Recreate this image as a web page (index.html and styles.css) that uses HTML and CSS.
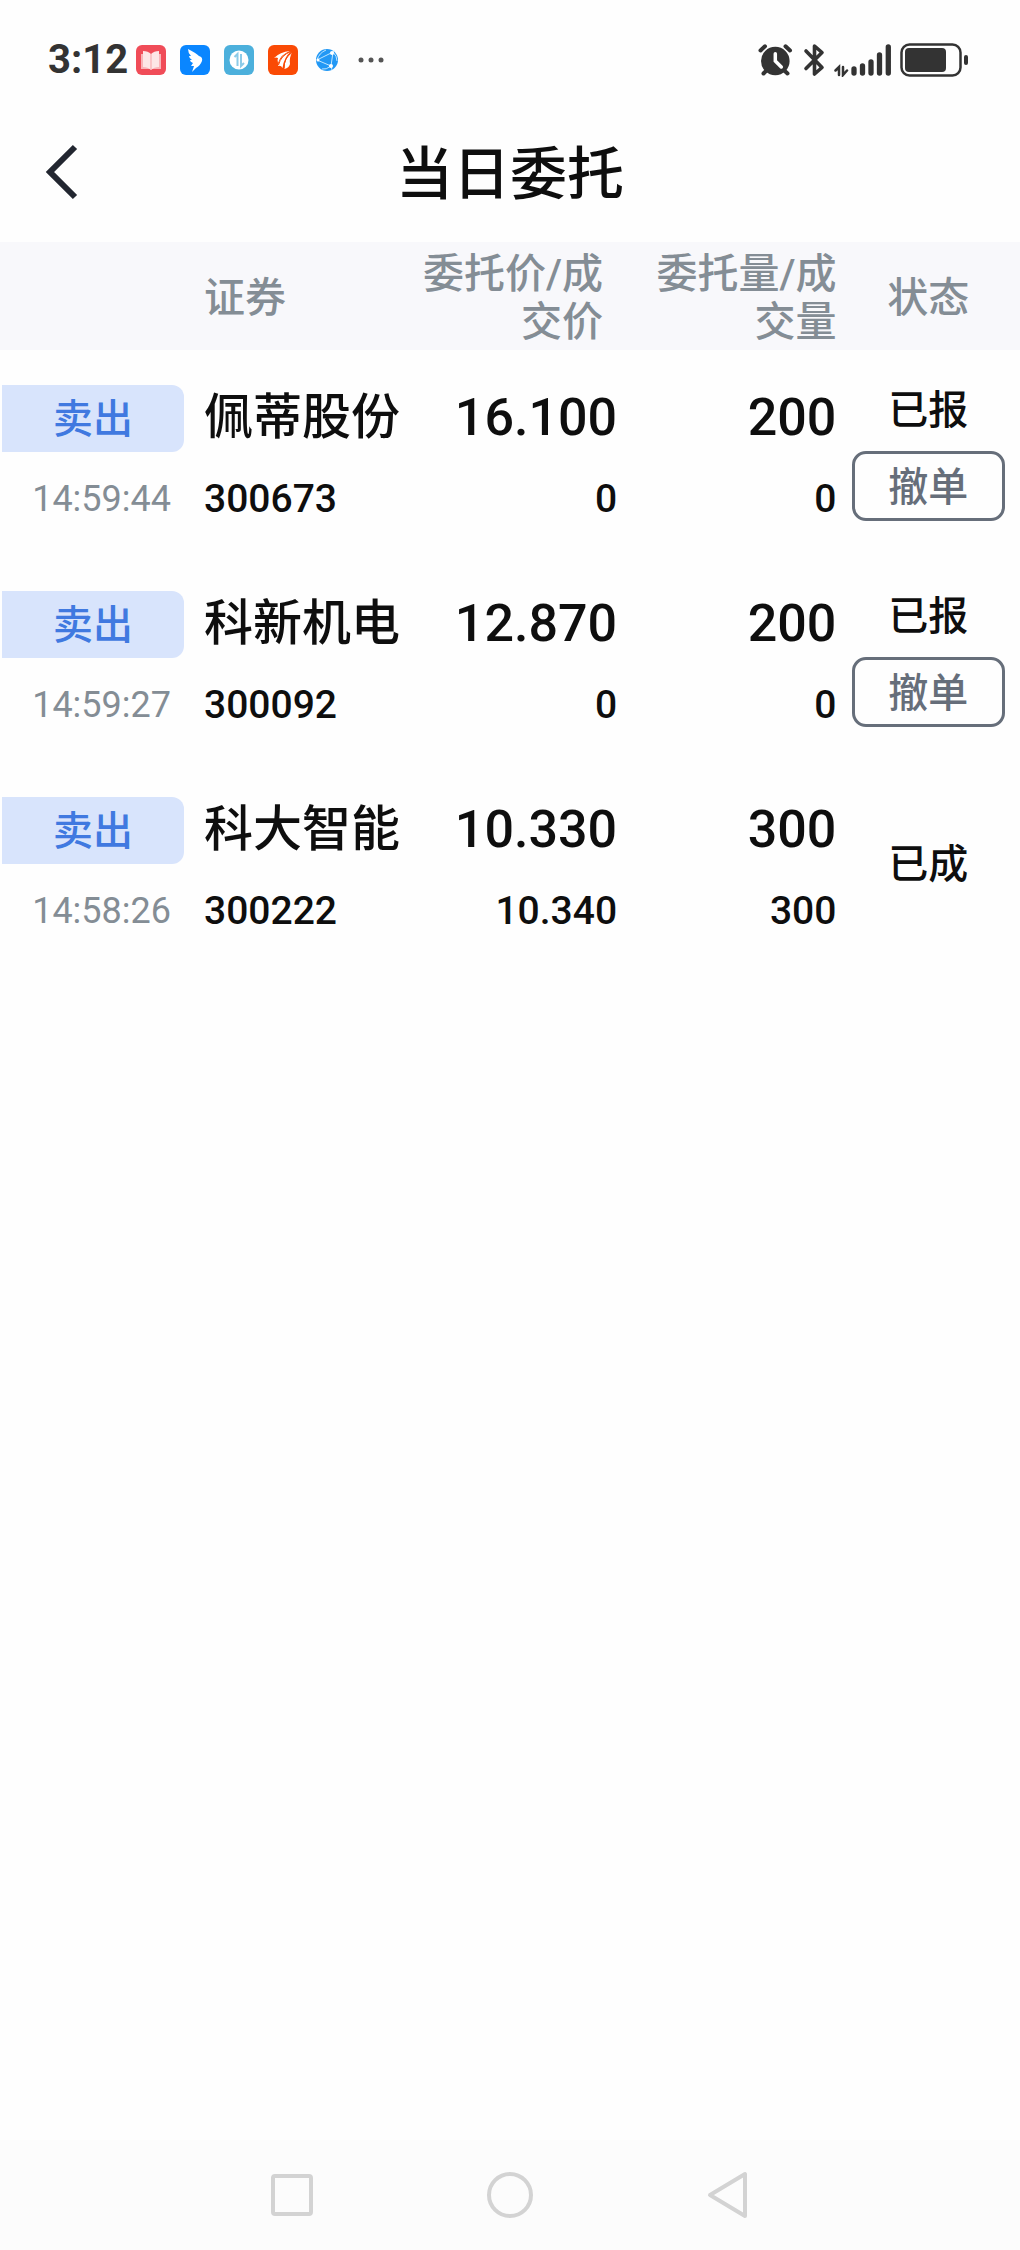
FILE: index.html
```html
<!DOCTYPE html>
<html lang="zh-CN">
<head>
  <meta charset="UTF-8">
  <meta name="viewport" content="width=device-width, initial-scale=1.0">
  <title>当日委托</title>
  <link rel="stylesheet" href="styles.css">
</head>
<body class="page">

<div class="status-bar">
  <div class="status-left">
    <span class="clock">3:12</span>
    <div class="notices">
      <svg width="30" height="30" viewBox="0 0 30 30">
        <rect width="30" height="30" rx="6" fill="#f04c58"/>
        <path d="M5 9h20v15H5z" fill="#f9b4b8"/>
        <path d="M7 6q5 0 8 3q3-3 8-3v16q-5 0-8 3q-3-3-8-3z" fill="#fde6e6"/>
        <path d="M15 9v16" stroke="#f7a3a8" stroke-width="1"/>
      </svg>
      <svg width="30" height="30" viewBox="0 0 30 30">
        <rect width="30" height="30" rx="6" fill="#0a86ff"/>
        <path d="M8 4q8 4 11 7q4 1 3 5q-2 5-6 7l-4 4l2-6h-3l2-3q-3-1-3-3l2 0q-3-2-3-4l2 0q-3-3-3-7z" fill="#fff"/>
      </svg>
      <svg width="30" height="30" viewBox="0 0 30 30">
        <rect width="30" height="30" rx="6" fill="#4cb0dc"/>
        <circle cx="15" cy="15" r="9.500" fill="#fff"/>
        <path d="M10.500 12l3-3v12M17 9v12l3-3" fill="none" stroke="#8ccbe8" stroke-width="2"/>
      </svg>
      <svg width="30" height="30" viewBox="0 0 30 30">
        <rect width="30" height="30" rx="6" fill="#fa4a05"/>
        <path d="M6 13Q12 7 22 6Q13 9 10 18Q9 15 10 13Q8 12 6 13z" fill="#fff"/>
        <path d="M10 21Q12 10 23 6.500Q16 12 14.500 23Q13 20 10 21z" fill="#fff"/>
        <path d="M16.500 24Q16 13 24 7.500Q21 13 22 19Q21 23 16.500 24z" fill="#fff"/>
        <path d="M10.500 20Q13 10 23 6.500M16 23Q16 13 24 7.500" fill="none" stroke="#fa4a05" stroke-width="1"/>
      </svg>
      <svg width="30" height="30" viewBox="0 0 30 30">
        <circle cx="15" cy="15" r="11" fill="#2298f5"/>
        <path d="M5 15l16-8l-2 14zM21 7l2-1M19 21l1 4M19 21q-5 4-9 3M5 15q2-7 9-10M21 7q4 4 4 9" fill="none" stroke="#bfe6ff" stroke-width="1"/>
        <circle cx="6" cy="15" r="1.500" fill="#fff"/>
        <circle cx="20" cy="8" r="2" fill="#fff"/>
        <circle cx="19" cy="21" r="2" fill="#fff"/>
      </svg>
      <svg width="30" height="30" viewBox="0 0 30 30" fill="#555">
        <circle cx="5" cy="15" r="2.500"/>
        <circle cx="15" cy="15" r="2.500"/>
        <circle cx="25" cy="15" r="2.500"/>
      </svg>
    </div>
  </div>

  <div class="status-right">
    <svg width="36" height="34" viewBox="0 0 36 34" fill="none" stroke="#333" stroke-width="4" stroke-linecap="round">
      <circle cx="17.300" cy="18" r="14.300" fill="#333" stroke="none"/>
      <path d="M2.500 7.500L7 3.300M27.500 3.300L32 7.500M8.600 27.300L5.500 30.500M26 27.300L29.500 30.500"/>
      <path d="M17.300 10.700V18L23.300 24" stroke="#fff" stroke-width="3.500"/>
    </svg>
    <svg width="24" height="34" viewBox="0 0 24 34" fill="none" stroke="#333" stroke-width="3.600" stroke-linecap="round" stroke-linejoin="round">
      <path d="M4 8l16 16.500l-7.500 6.500V3L20 9.500L4 25.500"/>
    </svg>
    <svg width="58" height="34" viewBox="0 0 58 34" fill="none" stroke="#333" stroke-linecap="round">
      <path d="M20 26v4M28.500 23v7M37 19v11M45.500 12v18M54.300 4v26" stroke-width="5.300"/>
      <path d="M1.500 27.500L5 24V32M9 24v8l4-4.500" stroke-width="2.500"/>
    </svg>
    <svg width="70" height="34" viewBox="0 0 70 34">
      <rect x="1.500" y="1.500" width="59" height="31" rx="8" fill="none" stroke="#333" stroke-width="2.500"/>
      <rect x="5" y="5" width="41" height="24" rx="4" fill="#333"/>
      <rect x="64" y="12" width="4" height="10" rx="2" fill="#333"/>
    </svg>
  </div>
</div>

<header class="app-bar">
  <button class="back" type="button" aria-label="返回">
    <svg width="34" height="56" viewBox="0 0 34 56" fill="none" stroke="#222630" stroke-width="6">
      <path d="M31 3L6 28l25 25"/>
    </svg>
  </button>
  <h1 class="title">当日委托</h1>
</header>

<main class="content">
  <table class="orders">
    <thead>
      <tr>
        <th class="col-side" aria-label="方向"></th>
        <th class="col-name">证券</th>
        <th class="col-price">委托价/成交价</th>
        <th class="col-amount">委托量/成交量</th>
        <th class="col-state">状态</th>
      </tr>
    </thead>
    <tbody>
      <tr>
        <td class="col-side"><div class="side">卖出</div><div class="time">14:59:44</div></td>
        <td class="col-name"><div class="name">佩蒂股份</div><div class="sub-line">300673</div></td>
        <td class="col-price"><div class="number">16.100</div><div class="sub-line">0</div></td>
        <td class="col-amount"><div class="number">200</div><div class="sub-line">0</div></td>
        <td class="col-state"><div class="state">已报</div><button class="cancel" type="button">撤单</button></td>
      </tr>
      <tr>
        <td class="col-side"><div class="side">卖出</div><div class="time">14:59:27</div></td>
        <td class="col-name"><div class="name">科新机电</div><div class="sub-line">300092</div></td>
        <td class="col-price"><div class="number">12.870</div><div class="sub-line">0</div></td>
        <td class="col-amount"><div class="number">200</div><div class="sub-line">0</div></td>
        <td class="col-state"><div class="state">已报</div><button class="cancel" type="button">撤单</button></td>
      </tr>
      <tr>
        <td class="col-side"><div class="side">卖出</div><div class="time">14:58:26</div></td>
        <td class="col-name"><div class="name">科大智能</div><div class="sub-line">300222</div></td>
        <td class="col-price"><div class="number">10.330</div><div class="sub-line">10.340</div></td>
        <td class="col-amount"><div class="number">300</div><div class="sub-line">300</div></td>
        <td class="col-state"><div class="state">已成</div></td>
      </tr>
    </tbody>
  </table>
</main>

<nav class="nav-bar">
  <div class="nav-keys">
    <button class="nav-key" type="button" aria-label="最近任务">
      <svg width="48" height="48" viewBox="0 0 48 48"><rect x="5" y="5" width="38" height="38" rx="2"/></svg>
    </button>
    <button class="nav-key" type="button" aria-label="主屏幕">
      <svg width="48" height="48" viewBox="0 0 48 48"><circle cx="24" cy="24" r="21"/></svg>
    </button>
    <button class="nav-key" type="button" aria-label="返回上一页">
      <svg width="48" height="48" viewBox="0 0 48 48"><path d="M41 3v42L6 24z"/></svg>
    </button>
  </div>
</nav>

</body>
</html>
```
FILE: styles.css
```css
/* base */
.page {
  display: flex;
  flex-direction: column;
  min-height: 100vh;
  margin: 0;
  background: #fefefe;
  color: #0e0e0e;
  font-family: Roboto, "Noto Sans CJK SC", sans-serif;
  font-weight: 500;
}

button {
  margin: 0;
  padding: 0;
  border: 0;
  background: none;
  font: inherit;
}

svg {
  display: block;
}

/* status bar */
.status-bar {
  display: flex;
  justify-content: space-between;
  align-items: center;
  height: 84px;
  padding: 18px 50px 0 48px;
}

.status-left,
.status-right {
  display: flex;
  align-items: center;
  gap: 8px;
}

.notices {
  display: flex;
  gap: 14px;
}

.clock {
  color: #333;
  font-size: 40px;
  line-height: 48px;
  font-weight: 700;
}

/* title bar */
.app-bar {
  display: grid;
  grid-template-columns: 1fr auto 1fr;
  align-items: center;
  height: 140px;
  padding: 0 44px;
}

.back {
  justify-self: start;
}

.title {
  margin: 0;
  padding-bottom: 6px;
  font-size: 57px;
  font-weight: 500;
}

/* orders */
.content {
  flex: 1;
}

.orders {
  width: 100%;
  table-layout: fixed;
  border-collapse: collapse;
}

.orders th,
.orders td {
  box-sizing: border-box;
  padding: 0;
}

.orders th {
  height: 108px;
  padding-top: 3px;
  background: #f8f8fb;
  color: #848d95;
  font-size: 41px;
  line-height: 48px;
  font-weight: 500;
}

.orders td {
  height: 206px;
  padding-top: 35px;
  vertical-align: top;
}

.orders .col-side {
  width: 20%;
}

.orders .col-name {
  width: 20%;
  text-align: left;
  white-space: nowrap;
}

.orders .col-price {
  width: 20.5%;
  text-align: right;
}

.orders th.col-price {
  padding-right: 14px;
}

.orders .col-amount {
  width: 21.5%;
  text-align: right;
}

.orders th.col-amount {
  padding-left: 20px;
}

.orders .col-state {
  width: 18%;
  text-align: center;
}

.orders td.col-state {
  padding: 0;
  vertical-align: middle;
}

.side {
  margin: 0 20px 0 2px;
  padding-top: 2px;
  border-radius: 0 12px 12px 0;
  background: #d8e4fc;
  color: #4079e0;
  font-size: 40px;
  line-height: 65px;
  text-align: center;
}

.time {
  margin: 14px 20px 0 0;
  padding-right: 13px;
  color: #848d95;
  font-size: 36px;
  line-height: 66px;
  font-weight: 400;
  text-align: right;
}

.name,
.number {
  line-height: 65px;
}

.name {
  font-size: 49px;
}

.number {
  font-size: 52px;
}

.sub-line {
  margin-top: 16px;
  font-size: 39px;
  line-height: 66px;
}

.state {
  font-size: 40px;
  line-height: 52px;
}

.cancel {
  width: 153px;
  height: 70px;
  margin-top: 14px;
  padding-bottom: 4px;
  border: 3px solid #666e7a;
  border-radius: 14px;
  color: #666e7a;
  font-size: 40px;
}

/* system keys */
.nav-bar {
  display: flex;
  justify-content: center;
  height: 110px;
  background: #fcfcfc;
}

.nav-keys {
  display: flex;
  justify-content: space-around;
  align-items: center;
  width: 64%;
}

.nav-key svg {
  fill: none;
  stroke: #d3d3d3;
  stroke-width: 4;
  stroke-linejoin: round;
}
```
